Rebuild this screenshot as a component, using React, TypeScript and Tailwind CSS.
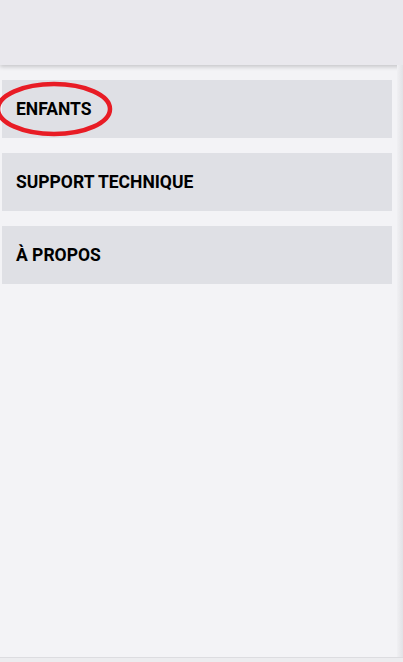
export default function App() {
  const items = ["ENFANTS", "SUPPORT TECHNIQUE", "À PROPOS"];
  return (
    <div className="relative flex h-[662px] w-[403px] flex-col overflow-hidden bg-[#f3f3f6] font-['Roboto',sans-serif]">
      <header className="h-[65px] shrink-0 bg-[#e9e8ed] shadow-[0_2px_4px_rgba(0,0,0,0.18)]" />
      <div className="flex flex-1 flex-row">
        <nav className="flex flex-1 flex-col gap-[15px] pl-[2px] pr-[5px] pt-[15px]">
          {items.map((label) => (
            <div
              key={label}
              className="flex h-[58px] items-center bg-[#dfe0e5] px-[14px] text-[17.5px] font-bold text-black"
            >
              {label}
            </div>
          ))}
        </nav>
        <div className="w-[6px] bg-gradient-to-r from-[#f0f0f3] to-[#e2e2e6]" />
      </div>
      <div className="h-[5px] shrink-0 border-t border-[#dcdce0] bg-[#ececef]" />
      <svg
        className="pointer-events-none absolute left-0 top-0"
        width="403"
        height="662"
      >
        <ellipse
          cx="54"
          cy="109"
          rx="56"
          ry="25"
          fill="none"
          stroke="#e81c25"
          strokeWidth="4.5"
        />
      </svg>
    </div>
  );
}
